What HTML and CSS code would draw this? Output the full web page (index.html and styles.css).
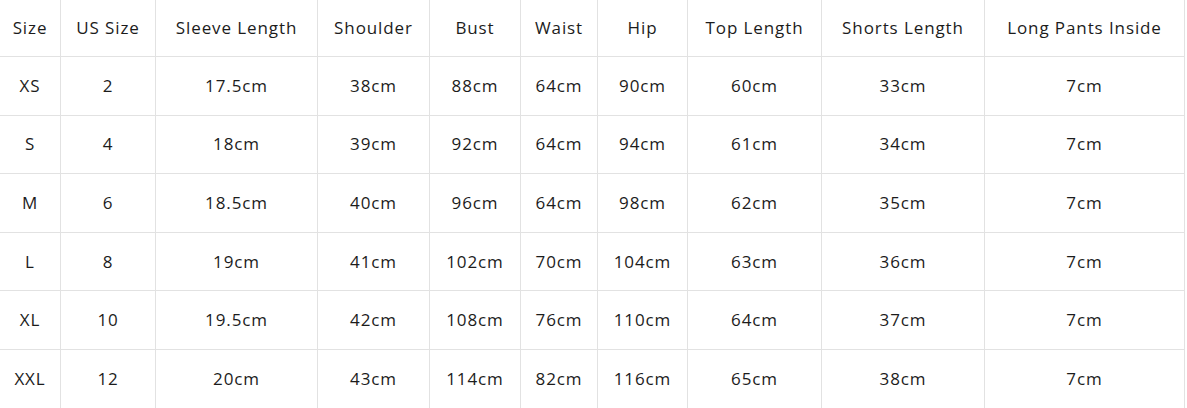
FILE: index.html
```html
<!DOCTYPE html>
<html lang="en">
<head>
<meta charset="utf-8">
<title>Size Chart</title>
<link rel="stylesheet" href="styles.css">
</head>
<body>
<div class="chart" role="table">
  <div class="cell">Size</div><div class="cell">US Size</div><div class="cell">Sleeve Length</div><div class="cell">Shoulder</div><div class="cell">Bust</div><div class="cell">Waist</div><div class="cell">Hip</div><div class="cell">Top Length</div><div class="cell">Shorts Length</div><div class="cell">Long Pants Inside</div>
  <div class="cell">XS</div><div class="cell">2</div><div class="cell">17.5cm</div><div class="cell">38cm</div><div class="cell">88cm</div><div class="cell">64cm</div><div class="cell">90cm</div><div class="cell">60cm</div><div class="cell">33cm</div><div class="cell">7cm</div>
  <div class="cell">S</div><div class="cell">4</div><div class="cell">18cm</div><div class="cell">39cm</div><div class="cell">92cm</div><div class="cell">64cm</div><div class="cell">94cm</div><div class="cell">61cm</div><div class="cell">34cm</div><div class="cell">7cm</div>
  <div class="cell">M</div><div class="cell">6</div><div class="cell">18.5cm</div><div class="cell">40cm</div><div class="cell">96cm</div><div class="cell">64cm</div><div class="cell">98cm</div><div class="cell">62cm</div><div class="cell">35cm</div><div class="cell">7cm</div>
  <div class="cell">L</div><div class="cell">8</div><div class="cell">19cm</div><div class="cell">41cm</div><div class="cell">102cm</div><div class="cell">70cm</div><div class="cell">104cm</div><div class="cell">63cm</div><div class="cell">36cm</div><div class="cell">7cm</div>
  <div class="cell">XL</div><div class="cell">10</div><div class="cell">19.5cm</div><div class="cell">42cm</div><div class="cell">108cm</div><div class="cell">76cm</div><div class="cell">110cm</div><div class="cell">64cm</div><div class="cell">37cm</div><div class="cell">7cm</div>
  <div class="cell">XXL</div><div class="cell">12</div><div class="cell">20cm</div><div class="cell">43cm</div><div class="cell">114cm</div><div class="cell">82cm</div><div class="cell">116cm</div><div class="cell">65cm</div><div class="cell">38cm</div><div class="cell">7cm</div>
</div>
</body>
</html>
```
FILE: styles.css
```css
html, body {
  margin: 0;
  padding: 0;
  background: #ffffff;
}
body {
  font-family: "Open Sans", "DejaVu Sans", sans-serif;
  font-size: 17px;
  color: #1c1c1c;
  overflow: hidden;
}
.chart {
  display: grid;
  grid-template-columns: 61px 95px 162px 112px 91px 77px 90px 134px 163px 200px;
  grid-template-rows: 57px repeat(6, 58.6px);
  width: 1185px;
}
.cell {
  box-sizing: border-box;
  border-right: 1px solid #e2e2e2;
  border-bottom: 1px solid #e2e2e2;
  display: flex;
  align-items: center;
  justify-content: center;
  white-space: nowrap;
  letter-spacing: 0.9px;
  padding-bottom: 1px;
}
```
